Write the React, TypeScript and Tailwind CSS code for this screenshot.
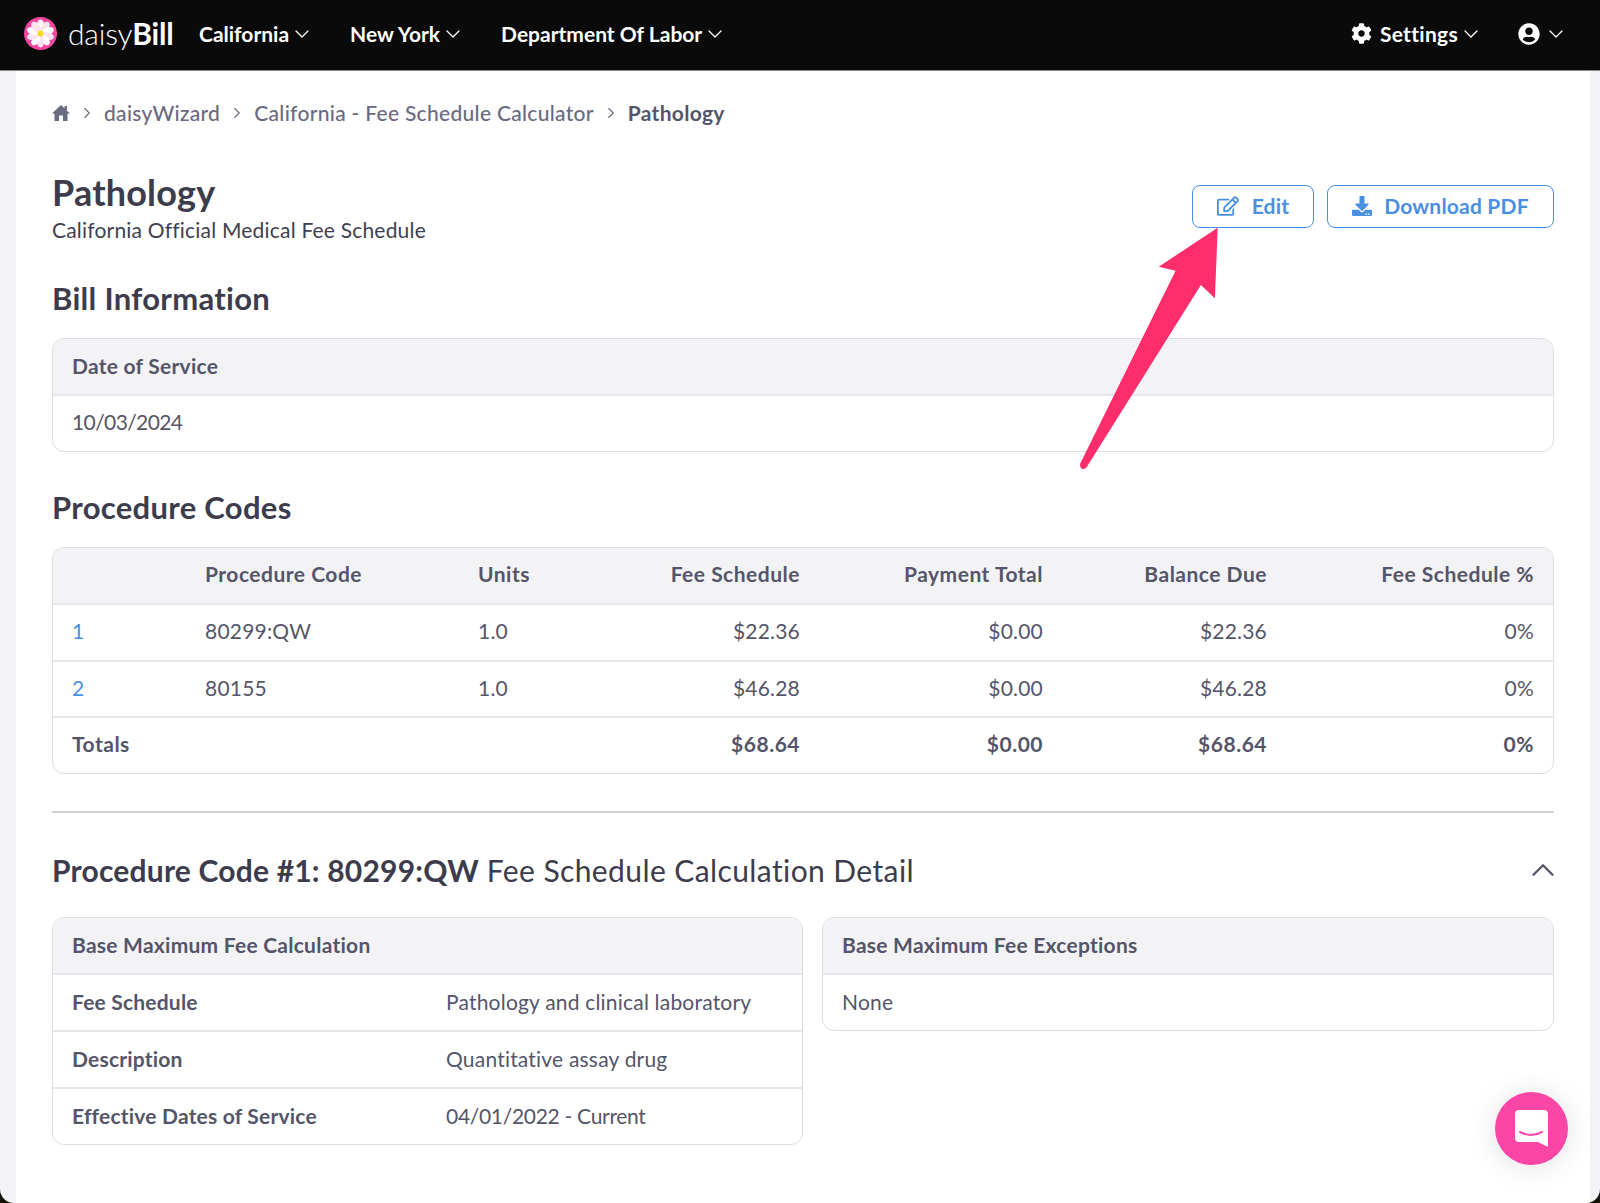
import { ChevronDown, ChevronRight, ChevronUp } from "lucide-react";
import { FaCog, FaDownload, FaRegEdit, FaUserCircle } from "react-icons/fa";

const petals = [0, 36, 72, 108, 144, 180, 216, 252, 288, 324];

function Logo() {
  return (
    <svg width="33" height="33" viewBox="0 0 33 33" className="shrink-0">
      <circle cx="16.5" cy="16.5" r="16.5" fill="#f5479f" />
      {petals.map((a) => (
        <ellipse key={a} cx="16.5" cy="8.5" rx="3.6" ry="6" fill={a % 72 === 0 ? "#ffffff" : "#fde3ef"} transform={`rotate(${a} 16.5 16.5)`} />
      ))}
      <circle cx="16.5" cy="16.5" r="3" fill="#fcd91c" />
    </svg>
  );
}

function HomeIcon() {
  return (
    <svg width="18" height="18" viewBox="0 0 18 18" fill="#6a6a80" className="shrink-0">
      <path d="M9 1 L18 9.5 H15.5 V17 H11 V11.5 H7 V17 H2.5 V9.5 H0 Z" />
      <rect x="12.5" y="2" width="2.5" height="4" />
    </svg>
  );
}

function Chevron() {
  return <ChevronDown size={24} strokeWidth={1.3} className="ml-[1px] text-white" />;
}

function NavItem({ label, className }: { label: string; className?: string }) {
  return (
    <div className={`flex items-center text-[21px] font-bold tracking-normal text-white ${className ?? ""}`}>
      <span>{label}</span>
      <Chevron />
    </div>
  );
}

function Card({ title, className, children }: { title: string; className?: string; children: React.ReactNode }) {
  return (
    <div className={`overflow-hidden rounded-[12px] border border-[#dcdce4] ${className ?? ""}`}>
      <div className="flex h-[55px] items-center bg-[#f3f3f5] px-[19px] font-bold tracking-[0.25px] text-[#55556a]">{title}</div>
      {children}
    </div>
  );
}

function KeyValue({ label, value, valueClass }: { label: string; value: string; valueClass?: string }) {
  return (
    <div className="flex h-[57px] items-center border-t-2 border-[#e6e6ec] px-[19px]">
      <span className="w-[374px] font-bold tracking-[0.2px] text-[#55556a]">{label}</span>
      <span className={valueClass}>{value}</span>
    </div>
  );
}

const rowClass = "grid grid-cols-[133px_273px_80px_242px_243px_224px_267px] items-center px-[19px] pb-[2px]";

const rows = [
  { n: "1", code: "80299:QW", fee: "$22.36", bal: "$22.36", height: "h-[57px]" },
  { n: "2", code: "80155", fee: "$46.28", bal: "$46.28", height: "h-[56px]" },
];

export default function App() {
  return (
    <div className="relative h-[1203px] w-[1600px] overflow-hidden bg-[#14140a] font-['Lato',sans-serif] text-[21px] tracking-[0.2px] text-[#55556a]">
      <div className="flex h-[1203px] flex-col overflow-hidden rounded-b-[14px] bg-[#f3f3f6]">
        <header className="flex h-[71px] shrink-0 items-center border-b border-[#888] bg-[#0a0a0a] pb-[3px] pl-[24px] pr-[32px]">
          <Logo />
          <div className="ml-[11px] w-[131px] text-[30px] tracking-[-0.2px] text-white">
            <span className="font-light">daisy</span>
            <span className="font-bold">Bill</span>
          </div>
          <NavItem label="California" />
          <NavItem label="New York" className="ml-[36px]" />
          <NavItem label="Department Of Labor" className="ml-[36px]" />
          <div className="ml-auto flex items-center gap-[8px]">
            <FaCog size={21} className="text-white" />
            <NavItem label="Settings" className="[&>span]:tracking-[0.3px]" />
          </div>
          <div className="ml-[35px] flex items-center gap-[3px] text-white">
            <FaUserCircle size={22} />
            <Chevron />
          </div>
        </header>

        <main className="ml-[16px] mr-[10px] flex-1 bg-white px-[36px]">
          <nav className="flex h-[84px] items-center font-medium tracking-[0.3px] text-[#6a6a80]">
            <HomeIcon />
            <ChevronRight size={18} strokeWidth={1.5} className="mx-[8px]" />
            <span>daisyWizard</span>
            <ChevronRight size={18} strokeWidth={1.5} className="mx-[8px]" />
            <span>California - Fee Schedule Calculator</span>
            <ChevronRight size={18} strokeWidth={1.5} className="mx-[8px]" />
            <span className="font-bold text-[#55556a]">Pathology</span>
          </nav>

          <div className="mt-[17px] flex items-start justify-between">
            <div>
              <h1 className="text-[36px] leading-[40px] font-bold tracking-[0.2px] text-[#3c3c4c]">Pathology</h1>
              <p className="mt-[2px] text-[#3f3f4f]">California Official Medical Fee Schedule</p>
            </div>
            <div className="mt-[13px] flex gap-[13px]">
              <button type="button" className="flex h-[43px] w-[122px] items-center justify-center gap-[13px] rounded-[8px] border border-[#4a90e2] pb-[1px] font-bold text-[#4a90e2]">
                <FaRegEdit size={22} />
                Edit
              </button>
              <button type="button" className="flex h-[43px] w-[227px] items-center justify-center gap-[12px] rounded-[8px] border border-[#4a90e2] pb-[1px] font-bold text-[#4a90e2]">
                <FaDownload size={20} />
                Download PDF
              </button>
            </div>
          </div>

          <h2 className="mt-[32px] text-[31px] leading-[40px] font-bold tracking-[0.3px] text-[#3c3c4c]">Bill Information</h2>
          <Card title="Date of Service" className="mt-[20px]">
            <div className="flex h-[57px] items-center border-t-2 border-[#e6e6ec] px-[19px] pb-[2px] tracking-[-0.6px]">10/03/2024</div>
          </Card>

          <h2 className="mt-[35px] text-[31px] leading-[40px] font-bold tracking-[0.3px] text-[#3c3c4c]">Procedure Codes</h2>
          <div className="mt-[20px] overflow-hidden rounded-[12px] border border-[#dcdce4]">
            <div className={`${rowClass} h-[55px] bg-[#f3f3f5] font-bold tracking-[0.5px]`}>
              <span />
              <span>Procedure Code</span>
              <span>Units</span>
              <span className="text-right">Fee Schedule</span>
              <span className="text-right">Payment Total</span>
              <span className="text-right">Balance Due</span>
              <span className="text-right">Fee Schedule %</span>
            </div>
            {rows.map((r) => (
              <div key={r.n} className={`${rowClass} ${r.height} border-t-2 border-[#e6e6ec]`}>
                <span className="text-[#4a90e2]">{r.n}</span>
                <span>{r.code}</span>
                <span>1.0</span>
                <span className="text-right">{r.fee}</span>
                <span className="text-right">$0.00</span>
                <span className="text-right">{r.bal}</span>
                <span className="text-right">0%</span>
              </div>
            ))}
            <div className={`${rowClass} h-[57px] border-t-2 border-[#e6e6ec] font-bold tracking-[0.5px]`}>
              <span>Totals</span>
              <span />
              <span />
              <span className="text-right">$68.64</span>
              <span className="text-right">$0.00</span>
              <span className="text-right">$68.64</span>
              <span className="text-right">0%</span>
            </div>
          </div>

          <hr className="mt-[37px] border-t-2 border-[#d2d2d6]" />

          <div className="mt-[37px] flex items-center justify-between">
            <h2 className="text-[30px] leading-[40px] tracking-[0.2px] text-[#3c3c4c]">
              <span className="font-bold">Procedure Code #1: 80299:QW</span> <span className="tracking-[0.4px]">Fee Schedule Calculation Detail</span>
            </h2>
            <ChevronUp size={38} strokeWidth={1.5} className="mr-[-8px] text-[#55556a]" />
          </div>

          <div className="mt-[27px] flex items-start gap-[19px]">
            <Card title="Base Maximum Fee Calculation" className="w-[751px]">
              <KeyValue label="Fee Schedule" value="Pathology and clinical laboratory" />
              <KeyValue label="Description" value="Quantitative assay drug" />
              <KeyValue label="Effective Dates of Service" value="04/01/2022 - Current" valueClass="tracking-[-0.3px]" />
            </Card>
            <Card title="Base Maximum Fee Exceptions" className="w-[732px]">
              <div className="flex h-[57px] items-center border-t-2 border-[#e6e6ec] px-[19px]">None</div>
            </Card>
          </div>
        </main>
      </div>

      {/* annotation arrow over the page */}
      <svg className="absolute left-0 top-0" width="1600" height="1203" fill="none">
        <path
          d="M1217.7 227.7 L1158.8 266.7 L1175.6 270.7 L1080 464 Q1080 469 1083 469 Q1086 469 1088 465 L1200.9 285 L1214.9 298.3 Z"
          fill="#ff2d6b"
        />
      </svg>

      <button type="button" className="absolute left-[1495px] top-[1092px] flex h-[73px] w-[73px] items-center justify-center rounded-full bg-[#fb46a6] shadow-[0_2px_30px_rgba(0,0,0,0.12)]">
        <svg width="33" height="37" viewBox="0 0 33 37">
          <path d="M4 0 H29 Q33 0 33 4 V37 L23 32 H4 Q0 32 0 28 V4 Q0 0 4 0 Z" fill="#fff" />
          <path d="M5 22 Q16 28 27 22" stroke="#fb46a6" strokeWidth="2" fill="none" strokeLinecap="round" />
        </svg>
      </button>
    </div>
  );
}
